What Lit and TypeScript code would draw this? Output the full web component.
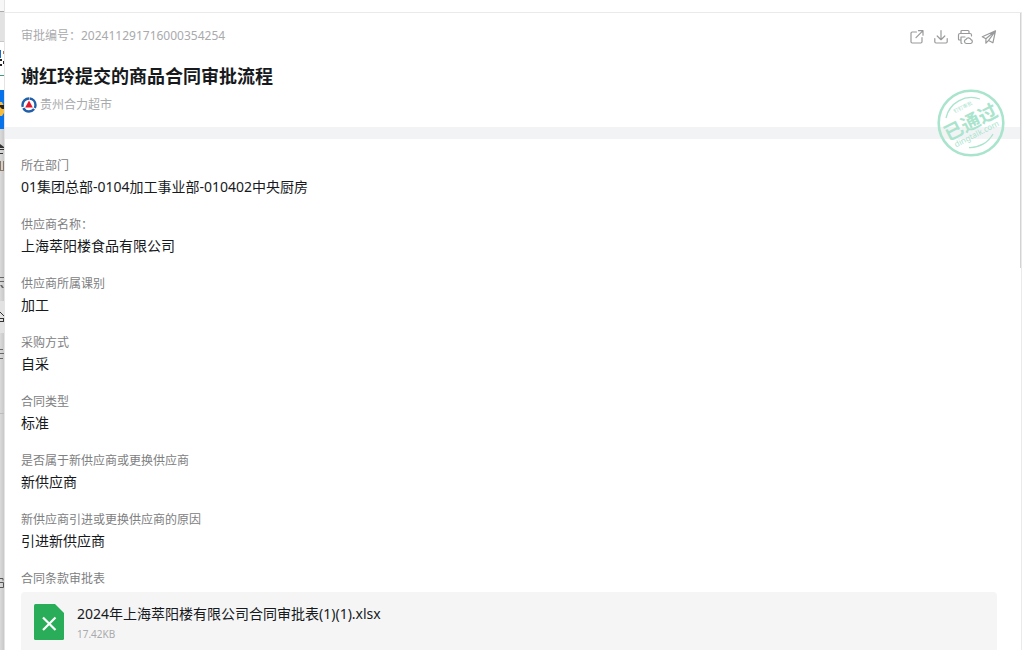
import { LitElement, html, css, svg } from "lit";
import { customElement } from "lit/decorators.js";

const fields: [string, string][] = [
  ["所在部门", "01集团总部-0104加工事业部-010402中央厨房"],
  ["供应商名称：", "上海萃阳楼食品有限公司"],
  ["供应商所属课别", "加工"],
  ["采购方式", "自采"],
  ["合同类型", "标准"],
  ["是否属于新供应商或更换供应商", "新供应商"],
  ["新供应商引进或更换供应商的原因", "引进新供应商"],
];

const actions = [
  { label: "打开", icon: svg`<path d="M7.5 3H3.2Q2 3 2 4.2v8.600Q2 14 3.200 14h8.600Q13 14 13 12.800V8.500M9.500 1.700H14v4.500M14 1.700L7 8.700"/>` },
  { label: "下载", icon: svg`<path d="M8 1.500v9M4.200 7L8 10.700 11.800 7M1.800 9.500v3.300Q1.800 14 3 14h10q1.200 0 1.200-1.200V9.500"/>` },
  { label: "打印", icon: svg`<path d="M4 4.500V2.500Q4 1.500 5 1.500h6q1 0 1 1v2M4 11H2.500Q1.500 11 1.500 10V6Q1.500 4.500 3 4.500h10q1.500 0 1.500 1.500v1M6 8H4v5.500Q4 14.500 5 14.500M4 8h4M9.300 14.500a2.100 2.100 0 0 1-.3-4.100 2.600 2.600 0 0 1 4.900.3 1.950 1.950 0 0 1-.2 3.800z"/>` },
  { label: "转发", icon: svg`<path d="M14.500 1.800L1.300 7.700l3.600 2v4.500l2.700-2.800 4.300 2.400zM14.500 1.800L4.900 9.700M14.500 1.800L7.600 11.400"/>` },
];

@customElement("app-root")
export class AppRoot extends LitElement {
  static styles = css`
    :host {
      display: flex;
      height: 100vh;
      overflow: hidden;
      background: #fff;
      color: #171a1d;
      font-family: "Noto Sans", "Noto Sans CJK SC", sans-serif;
      font-size: 14px;
      line-height: 22px;
    }
    .backdrop {
      flex: none;
      width: 4px;
      overflow: hidden;
      background: linear-gradient(to right, #dadada, #c8c8c8);
      border-right: 1px solid #e4e4e4;
    }
    .backdrop svg { display: block; }
    .page {
      flex: 1;
      min-width: 0;
      display: flex;
      flex-direction: column;
    }
    .topbar { flex: none; height: 12px; border-bottom: 1px solid #e9eaeb; }
    .panel { position: relative; flex: 1; min-height: 0; border-right: 1px solid #e9eaeb; overflow: hidden; }
    .thumb { position: absolute; top: 0; right: 0; width: 1px; height: 40%; background: #d2d3d4; }
    .head {
      position: relative;
      display: flex;
      justify-content: space-between;
      padding: 14px 24px 14px 16px;
      border-bottom: 12px solid #f2f3f5;
    }
    .number { font-size: 12px; line-height: 18px; color: #a9aaac; }
    h1 { margin: 18px 0 8px; font-size: 18px; line-height: 26px; font-weight: 700; }
    .org {
      display: flex;
      align-items: center;
      gap: 3px;
      font-size: 12px;
      line-height: 16px;
      color: #a9aaac;
    }
    .actions { display: flex; gap: 8px; height: 16px; margin-top: 2px; }
    button {
      display: block;
      width: 16px;
      height: 16px;
      padding: 0;
      border: 0;
      background: none;
      cursor: pointer;
    }
    .icon { display: block; fill: none; stroke: #999a9b; stroke-width: 1.2; stroke-linecap: round; stroke-linejoin: round; }
    .stamp { position: absolute; right: 15px; bottom: -31px; }
    .stamp text { fill: #a9e4cd; text-anchor: middle; }
    .stamp .word { font-size: 19px; font-weight: 700; }
    .stamp .site { font-size: 8px; }
    .stamp .brand { font-size: 5px; }
    .body { padding: 17px 24px 0 16px; }
    dl { margin: 0; }
    .field { margin-bottom: 17px; }
    dt, .caption { font-size: 12px; line-height: 20px; color: #7e8081; }
    dd { margin: 0; }
    .file {
      display: flex;
      align-items: flex-start;
      gap: 13px;
      margin-top: 3px;
      padding: 12px 13px;
      border-radius: 4px;
      background: #f5f5f5;
      color: inherit;
      text-decoration: none;
    }
    .file svg { flex: none; }
    .name { display: block; line-height: 20px; }
    .size { display: block; font-size: 10px; line-height: 20px; color: #a9aaac; }
  `;

  render() {
    return html`
      <aside class="backdrop" aria-hidden="true">
        <svg width="4" height="650" viewBox="0 0 4 650">
          <path fill="#f7f7f7" d="M0 0h4v11H0z" />
          <path fill="#e2e2e2" d="M0 12h4v29H0zM0 301h4v32H0z" />
          <path fill="#fff" d="M0 42h4v48H0z" />
          <path fill="#a8acb0" d="M0 11h4v1H0z" />
          <path fill="#c4c6c8" d="M0 41h4v1H0z" />
          <path fill="#1769c2" d="M0 50h1v8H0z" />
          <path fill="#222" d="M0 59h2v2H0zM0 64h2v2H0zM3 61h1v3H3z" />
          <path fill="#b9774a" d="M3 51h1v3H3z" />
          <path fill="#3d9c7a" d="M0 75h4v1H0z" />
          <path fill="#0872ea" d="M0 90h4v39H0z" />
          <path fill="#f6bb3f" d="M0 102h2l2 4v7l-2 3H0z" />
          <path fill="#222" d="M0 105h4v4H2L0 107z" />
          <path fill="#333" d="M0 144l4 3v1H0zM0 149h4v1H0zM0 153h3v1H0z" />
          <path fill="#8a7462" d="M0 161h1v9H0zM3 161h1v9H3zM0 170h4v1H0z" />
          <path fill="#666" d="M0 277h4v1H0zM0 281h4v1H0zM0 285h2l2 3H2zM0 349h3v1H0zM0 353h4v1H0zM0 358h3v1H0z" />
          <path fill="none" stroke="#333" d="M0 312l4 4M0 318.500h4M0 321.500h3.500M3.500 318v4" />
          <path fill="none" stroke="#555" d="M0 578.500h3v2M0 582.500h3.500v5H0" />
          <path fill="#bcbcbc" d="M0 413h4v1H0z" />
        </svg>
      </aside>
      <main class="page">
        <div class="topbar"></div>
        <article class="panel">
          <header class="head">
            <div>
              <div class="number">审批编号：202411291716000354254</div>
              <h1>谢红玲提交的商品合同审批流程</h1>
              <div class="org">
                <svg width="16" height="16" viewBox="0 0 16 16">
                  <circle cx="8" cy="8" r="6.500" fill="none" stroke="#215fa8" stroke-width="2.400" stroke-dasharray="12.400 1.213" stroke-dashoffset="-0.600" transform="rotate(-90 8 8)" />
                  <path fill="#e3172b" d="M8 3.600l3.800 6.800H4.200z" />
                </svg>
                <span>贵州合力超市</span>
              </div>
            </div>
            <div class="actions">
              ${actions.map((a) => html`<button type="button" aria-label=${a.label}>
                <svg class="icon" width="16" height="16" viewBox="0 0 16 16">${a.icon}</svg>
              </button>`)}
            </div>
            <svg class="stamp" width="70" height="70" viewBox="0 0 70 70">
              <g fill="none" stroke="#a9e4cd">
                <circle cx="35" cy="35" r="32.300" stroke-width="2.600" />
                <path stroke-width="1.300" d="M10 30A26 26 0 0 1 44 11M33 59.500A26 26 0 0 0 57 46" />
              </g>
              <g transform="rotate(-27 35 35)">
                <text class="brand" x="35" y="19">钉钉审批</text>
                <text class="word" x="35" y="41">已通过</text>
                <text class="site" x="35" y="50">dingtalk.com</text>
              </g>
            </svg>
          </header>
          <section class="body">
            <dl>
              ${fields.map(([k, v]) => html`<div class="field"><dt>${k}</dt><dd>${v}</dd></div>`)}
            </dl>
            <div class="caption">合同条款审批表</div>
            <a class="file" href="#">
              <svg width="30" height="36" viewBox="0 0 30 36">
                <path fill="#2aad58" d="M1.500 0H21l9 9v25.500q0 1.500-1.500 1.500h-27Q0 36 0 34.500v-33Q0 0 1.500 0z" />
                <path fill="none" stroke="#fff" stroke-width="2.200" d="M9 13.500l12.500 12.500M21.500 13.500L9 26" />
              </svg>
              <span>
                <span class="name">2024年上海萃阳楼有限公司合同审批表(1)(1).xlsx</span>
                <span class="size">17.42KB</span>
              </span>
            </a>
          </section>
          <div class="thumb"></div>
        </article>
      </main>
    `;
  }
}
